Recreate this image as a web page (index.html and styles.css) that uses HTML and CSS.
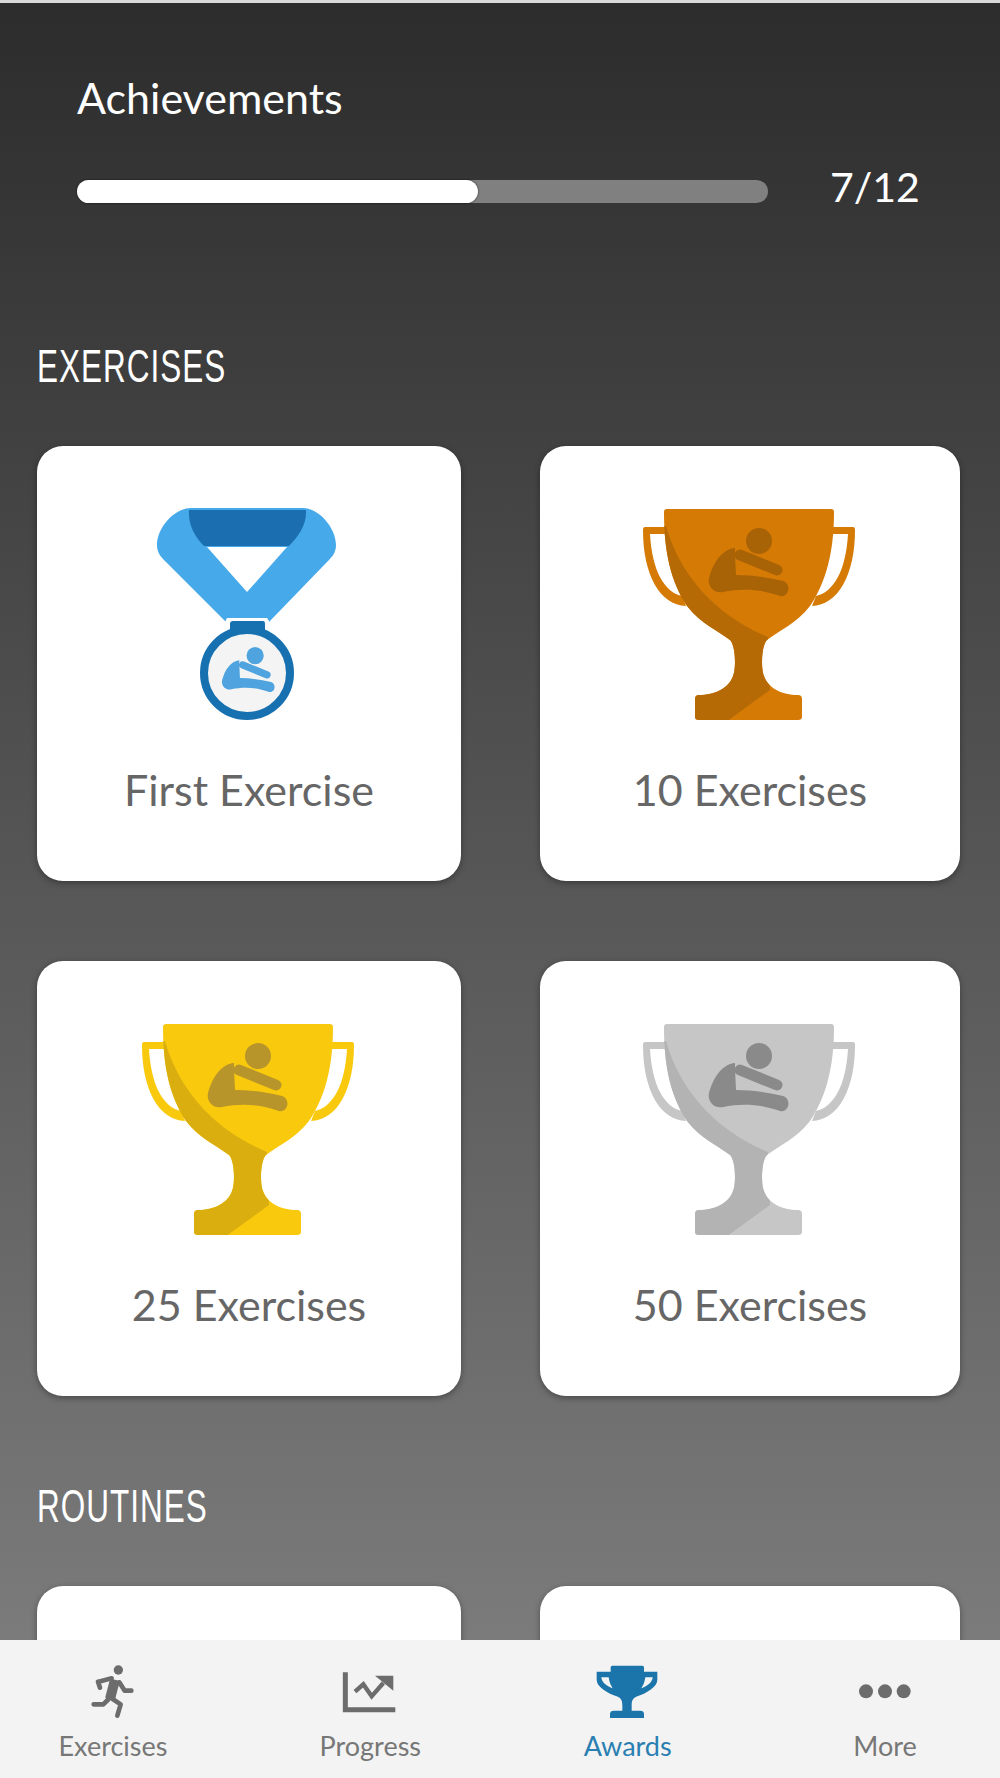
FILE: index.html
```html
<!DOCTYPE html>
<html>
<head>
  <title>Achievements</title>
  <link rel="stylesheet" href="styles.css">
</head>
<body>
  <svg class="icon-defs" width="0" height="0">
    <defs>
      <clipPath id="cup-clip">
        <path d="M37 19H201Q204 19 204 22C204 62 196 92 180 116C166 134 150 140 137 150C131 156 131 180 134 186C138 198 152 205 168 205Q172 205 172 209V227Q172 230 168 230H69Q65 230 65 227V209Q65 205 69 205C85 205 99 198 103 186C106 180 106 156 100 150C87 140 71 134 57 116C41 92 34 62 34 22Q34 19 37 19Z"/>
      </clipPath>
      <g id="figure">
        <circle cx="129" cy="51" r="13"/>
        <path d="M105 58C92 59 83 73 79 88C77 97 85 104 93 102C112 98 130 99 150 106C159 108 162 94 153 91C137 87 121 85 106 85L105 64Z"/>
        <path d="M110 65L147 80" class="figure-arm"/>
      </g>
      <g id="trophy">
        <path class="cup" d="M36 37H15Q13 37 13 40C13 85 30 115 56 116L52 106C34 102 22 80 20 44H36Z"/>
        <path class="cup" d="M202 37H223Q225 37 225 40C225 85 208 115 182 116L186 106C204 102 216 80 218 44H202Z"/>
        <path class="cup" d="M37 19H201Q204 19 204 22C204 62 196 92 180 116C166 134 150 140 137 150C131 156 131 180 134 186C138 198 152 205 168 205Q172 205 172 209V227Q172 230 168 230H69Q65 230 65 227V209Q65 205 69 205C85 205 99 198 103 186C106 180 106 156 100 150C87 140 71 134 57 116C41 92 34 62 34 22Q34 19 37 19Z"/>
        <path class="shade" clip-path="url(#cup-clip)" d="M30 36H36C50 85 85 125 138 147L140 200L96 232H30Z"/>
        <use href="#figure" class="figure"/>
      </g>
    </defs>
  </svg>

  <main class="content">
    <div class="summary">
      <h1 class="summary-title">Achievements</h1>
      <div class="summary-row">
        <div class="progress-track"><div class="progress-fill" style="width: 58%"></div></div>
        <span class="summary-count">7/12</span>
      </div>
    </div>

    <h2 class="section-title section-exercises">EXERCISES</h2>
    <div class="card-grid">
      <div class="card">
        <svg class="award-icon" viewBox="0 0 240 240">
          <path fill="#46a9ea" d="M62 18H174C190 18 207 38 207 55C207 63 203 67 198 72L140 132H97L37 72C32 67 28 63 28 55C28 38 45 18 62 18Z"/>
          <path fill="#1b6fb0" d="M60 20H177C178 34 170 46 160 56H75C65 46 59 34 60 20Z"/>
          <path fill="#fff" d="M78 57H158L118 102Z"/>
          <path fill="#fff" d="M98 128H138L142 134H95Z"/>
          <path fill="#1770b0" d="M104 131H134Q136 131 136 134V146H101V134Q101 131 104 131Z"/>
          <circle cx="118" cy="183" r="43" fill="#f4f4f4" stroke="#1770b0" stroke-width="8"/>
          <use href="#figure" class="figure-blue" transform="translate(41 132) scale(0.66)"/>
        </svg>
        <p class="card-label">First Exercise</p>
      </div>
      <div class="card">
        <svg class="award-icon bronze" viewBox="0 0 240 240"><use href="#trophy"/></svg>
        <p class="card-label">10 Exercises</p>
      </div>
      <div class="card">
        <svg class="award-icon gold" viewBox="0 0 240 240"><use href="#trophy"/></svg>
        <p class="card-label">25 Exercises</p>
      </div>
      <div class="card">
        <svg class="award-icon silver" viewBox="0 0 240 240"><use href="#trophy"/></svg>
        <p class="card-label">50 Exercises</p>
      </div>
    </div>

    <h2 class="section-title section-routines">ROUTINES</h2>
    <div class="card-grid">
      <div class="card"></div>
      <div class="card"></div>
    </div>
  </main>

  <nav class="tabbar">
    <a class="tab">
      <svg class="tab-icon" viewBox="234 135 210 165">
        <circle cx="355" cy="153" r="14" fill="#6c6c6c"/>
        <path d="M345 182L330 240" fill="none" stroke="#6c6c6c" stroke-width="30"/>
        <path d="M296 188L335 178M294 188L300 206M358 190L374 215H394M326 240L310 256H281M338 240L362 256L352 290" fill="none" stroke="#6c6c6c" stroke-width="14" stroke-linecap="round" stroke-linejoin="round"/>
      </svg>
      <span class="tab-label">Exercises</span>
    </a>
    <a class="tab">
      <svg class="tab-icon" viewBox="1005 135 210 165">
        <path d="M1036 160V272H1186" fill="none" stroke="#6c6c6c" stroke-width="15"/>
        <path d="M1065 218L1090 196L1115 232L1150 192" fill="none" stroke="#6c6c6c" stroke-width="13"/>
        <path d="M1125 170H1180V215Z" fill="#6c6c6c"/>
      </svg>
      <span class="tab-label">Progress</span>
    </a>
    <a class="tab tab-active">
      <svg class="tab-icon" viewBox="279 135 210 165">
        <path d="M332 145Q332 140 337 140H427Q432 140 432 145V158H472V182C472 204 440 222 412 232C398 238 395 245 395 262V275H420Q432 275 432 285V297H330V285Q330 275 342 275H367V262C367 245 364 238 350 232C322 222 290 204 290 182V158H332Z" fill="#1b75ab"/>
        <path d="M304 175H326C328 190 332 198 338 208C322 202 304 190 304 175ZM458 175H436C434 190 430 198 424 208C440 202 458 190 458 175Z" fill="#f3f3f3"/>
      </svg>
      <span class="tab-label">Awards</span>
    </a>
    <a class="tab">
      <svg class="tab-icon" viewBox="1050 135 210 165">
        <circle cx="1098" cy="217" r="21" fill="#6c6c6c"/>
        <circle cx="1155" cy="217" r="21" fill="#6c6c6c"/>
        <circle cx="1211" cy="217" r="21" fill="#6c6c6c"/>
      </svg>
      <span class="tab-label">More</span>
    </a>
  </nav>
</body>
</html>
```

FILE: styles.css
```css
html, body {
  margin: 0;
  height: 100%;
}
body {
  display: flex;
  flex-direction: column;
  height: 1778px;
  overflow: hidden;
  font-family: Lato, Arial, sans-serif;
  background: #f3f3f3;
}
.icon-defs {
  position: absolute;
}
.content {
  flex: 1;
  min-height: 0;
  overflow: hidden;
  border-top: 3px solid #d9d9d9;
  background: linear-gradient(#2c2c2c, #7b7b7b);
}
.summary {
  padding: 71px 40px 0 77px;
}
.summary-title {
  margin: 0;
  font-size: 43px;
  line-height: 48px;
  font-weight: 400;
  color: #fff;
}
.summary-row {
  display: flex;
  align-items: center;
  margin-top: 41px;
}
.progress-track {
  width: 691px;
  height: 23px;
  border-radius: 12px;
  background: #808080;
}
.progress-fill {
  height: 100%;
  border-radius: 12px;
  background: #fff;
  box-shadow: 0 0 2px rgba(0, 0, 0, 0.8);
}
.summary-count {
  margin: 0 0 8px 62px;
  font-size: 41px;
  line-height: 48px;
  color: #fff;
}
/* no condensed family is installed, so the headings get squeezed */
.section-title {
  margin: 0 0 0 37px;
  font-family: "Liberation Sans", sans-serif;
  font-size: 47px;
  line-height: 48px;
  font-weight: 400;
  letter-spacing: 1.5px;
  color: #fff;
  transform: scaleX(0.67);
  transform-origin: 0 0;
}
.section-exercises {
  margin-top: 123px;
  margin-bottom: 56px;
}
.section-routines {
  margin-top: 86px;
  margin-bottom: 56px;
}
.card-grid {
  display: grid;
  grid-template-columns: 424px 420px;
  column-gap: 79px;
  row-gap: 80px;
  padding-left: 37px;
}
.card {
  display: flex;
  flex-direction: column;
  align-items: center;
  height: 435px;
  padding-top: 44px;
  box-sizing: border-box;
  background: #fff;
  border-radius: 26px;
  box-shadow: 0 2px 6px rgba(0, 0, 0, 0.35);
}
.award-icon {
  width: 240px;
  height: 240px;
}
.card-label {
  margin: 36px 0 0;
  font-size: 43px;
  line-height: 48px;
  color: #666;
}
.bronze {
  --cup: #d67a06;
  --shade: #b66a06;
  --figure: #a86306;
}
.gold {
  --cup: #f9c90e;
  --shade: #dbae10;
  --figure: #b8952a;
}
.silver {
  --cup: #c6c6c6;
  --shade: #b3b3b3;
  --figure: #8a8a8a;
}
.cup {
  fill: var(--cup);
}
.shade {
  fill: var(--shade);
}
.figure {
  fill: var(--figure);
  stroke: var(--figure);
  stroke-width: 0;
}
.figure-blue {
  fill: #4fa3df;
  stroke: #4fa3df;
  stroke-width: 0;
}
.figure-arm {
  fill: none;
  stroke-width: 11;
  stroke-linecap: round;
}
.tabbar {
  display: flex;
  justify-content: space-between;
  flex-shrink: 0;
  height: 138px;
  padding: 24px 60px 0 58px;
  box-sizing: border-box;
  background: #f3f3f3;
}
.tab {
  display: flex;
  flex-direction: column;
  align-items: center;
  width: 110px;
  color: #777;
}
.tab-icon {
  width: 70px;
  height: 55px;
}
.tab-label {
  margin-top: 12px;
  font-size: 27px;
  line-height: 30px;
  white-space: nowrap;
}
.tab-active {
  color: #2a7fb2;
}
```
